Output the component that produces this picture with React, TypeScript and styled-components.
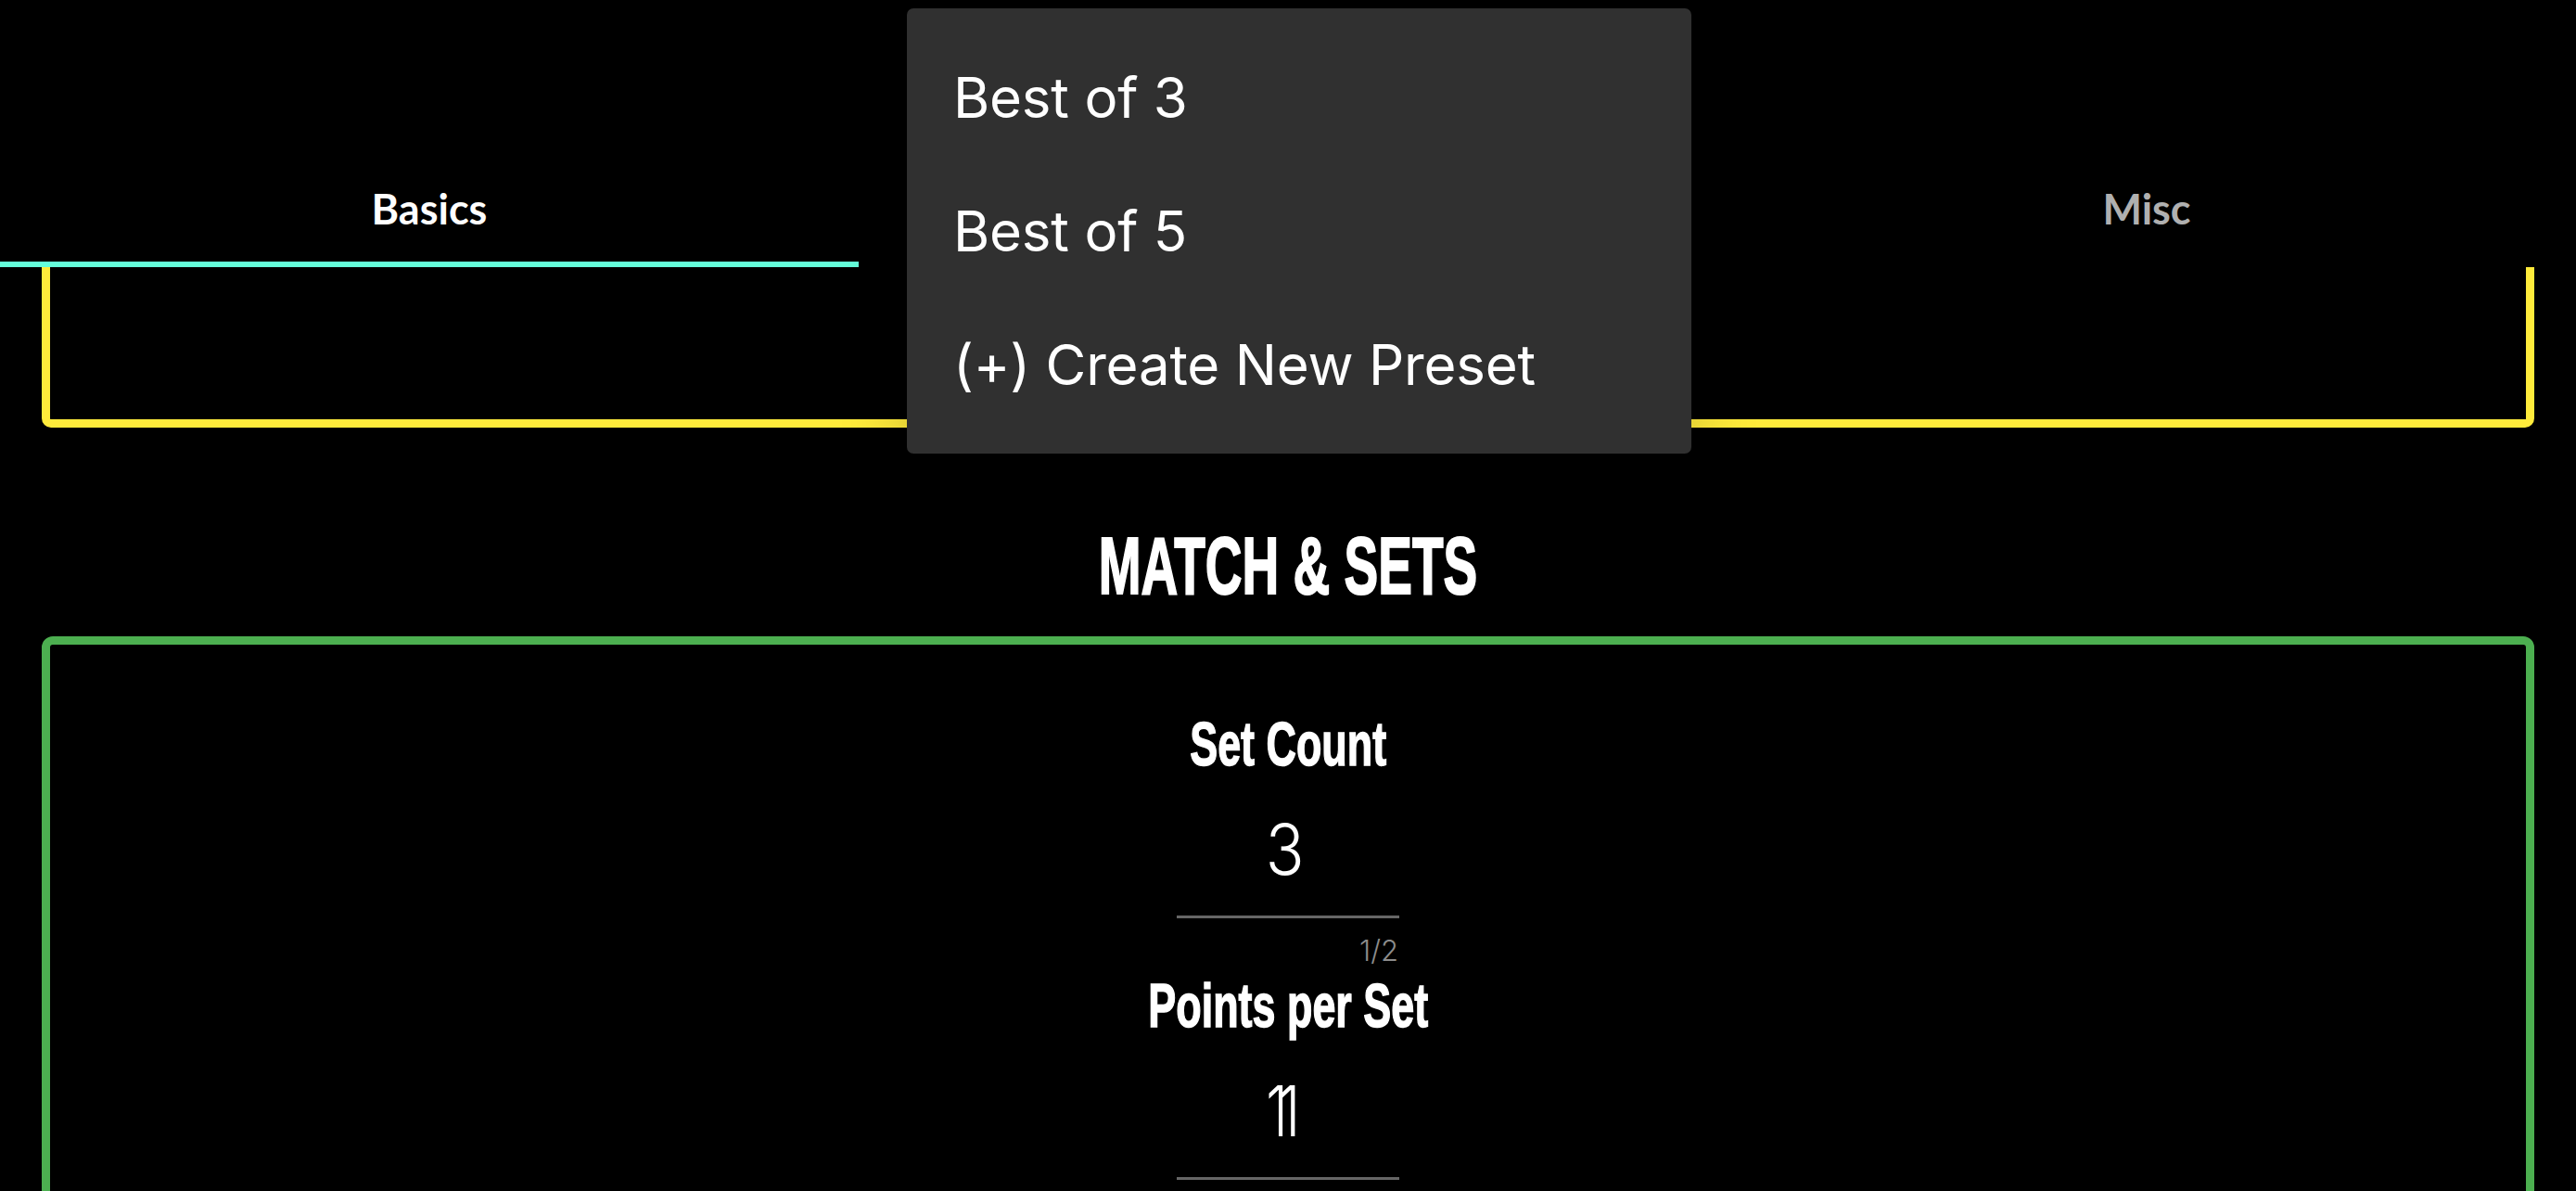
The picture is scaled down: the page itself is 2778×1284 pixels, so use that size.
import styled, { createGlobalStyle } from "styled-components";

const GlobalStyle = createGlobalStyle`
  html, body {
    margin: 0;
    background: #000;
  }
`;

const Screen = styled.div`
  position: relative;
  width: 2778px;
  height: 1284px;
  overflow: hidden;
  background: #000;
  color: #fff;
`;

const TabBar = styled.div`
  height: 288px;
  display: flex;
`;

const Tab = styled.div<{ $active?: boolean }>`
  flex: 1;
  box-sizing: border-box;
  padding-top: 198px;
  text-align: center;
  font-family: Lato, sans-serif;
  font-size: 45px;
  font-weight: 700;
  line-height: 54px;
  color: ${(p) => (p.$active ? "#fff" : "#b0b0b0")};
  border-bottom: 6px solid ${(p) => (p.$active ? "#64ffda" : "transparent")};
`;

const Content = styled.div`
  padding: 0 45px;
`;

const PresetPanel = styled.div`
  box-sizing: border-box;
  height: 172.5px;
  border: 9px solid #ffeb3b;
  border-top: 0;
  border-radius: 0 0 10px 10px;
`;

/* the original heading face is a condensed one, so squeeze Liberation Sans */
const SectionTitle = styled.h2`
  box-sizing: border-box;
  height: 225px;
  margin: 0;
  padding-top: 74px;
  display: flex;
  align-items: center;
  justify-content: center;
  font-family: "Liberation Sans", sans-serif;
  font-size: 88px;
  font-weight: 700;
  color: #fff;
  transform: scaleX(0.625);
  -webkit-text-stroke: 2px #fff;
`;

const SectionPanel = styled.div`
  box-sizing: border-box;
  height: 700px;
  padding-top: 65px;
  border: 9px solid #4caf50;
  border-radius: 12px;
`;

const Field = styled.div`
  display: flex;
  flex-direction: column;
  align-items: center;
`;

const FieldLabel = styled.div`
  height: 90px;
  font-family: "Liberation Sans", sans-serif;
  font-size: 67px;
  font-weight: 700;
  line-height: 84px;
  color: #fff;
  transform: scaleX(0.67);
  -webkit-text-stroke: 1.5px #fff;
`;

const FieldInput = styled.div`
  box-sizing: border-box;
  width: 240px;
  height: 140px;
  padding: 26px 7px 0 0;
  text-align: center;
  border-bottom: 3px solid #666;
`;

const FieldValue = styled.span<{ $tight?: boolean }>`
  display: inline-block;
  font-family: Inter, sans-serif;
  font-size: 75px;
  font-weight: 300;
  line-height: 80px;
  letter-spacing: ${(p) => (p.$tight ? "-13px" : "0")};
  margin-right: ${(p) => (p.$tight ? "13px" : "0")};
  transform: scaleX(${(p) => (p.$tight ? 0.8 : 0.92)});
`;

const FieldCounter = styled.div`
  box-sizing: border-box;
  width: 240px;
  height: 52px;
  padding: 18px 1px 0 0;
  text-align: right;
  font-family: Inter, sans-serif;
  font-size: 31px;
  font-weight: 300;
  line-height: 34px;
  color: #8c8c8c;
`;

const Menu = styled.div`
  position: absolute;
  top: 9px;
  left: 978px;
  width: 846px;
  box-sizing: border-box;
  padding: 24px 0;
  background: #303030;
  border-radius: 7px;
  box-shadow: 0 0 72px rgba(0, 0, 0, 0.22);
`;

const MenuItem = styled.div`
  height: 144px;
  padding-left: 50px;
  display: flex;
  align-items: center;
  font-family: Inter, sans-serif;
  font-size: 60px;
  font-weight: 400;
  letter-spacing: -0.2px;
  color: #fff;
`;

function App() {
  return (
    <Screen>
      <GlobalStyle />
      <TabBar>
        <Tab $active>Basics</Tab>
        <Tab />
        <Tab>Misc</Tab>
      </TabBar>
      <Content>
        <PresetPanel />
        <SectionTitle>MATCH &amp; SETS</SectionTitle>
        <SectionPanel>
          <Field>
            <FieldLabel>Set Count</FieldLabel>
            <FieldInput>
              <FieldValue>3</FieldValue>
            </FieldInput>
            <FieldCounter>1/2</FieldCounter>
          </Field>
          <Field>
            <FieldLabel>Points per Set</FieldLabel>
            <FieldInput>
              <FieldValue $tight>11</FieldValue>
            </FieldInput>
          </Field>
        </SectionPanel>
      </Content>
      <Menu>
        <MenuItem>Best of 3</MenuItem>
        <MenuItem>Best of 5</MenuItem>
        <MenuItem>(+) Create New Preset</MenuItem>
      </Menu>
    </Screen>
  );
}

export default App;
